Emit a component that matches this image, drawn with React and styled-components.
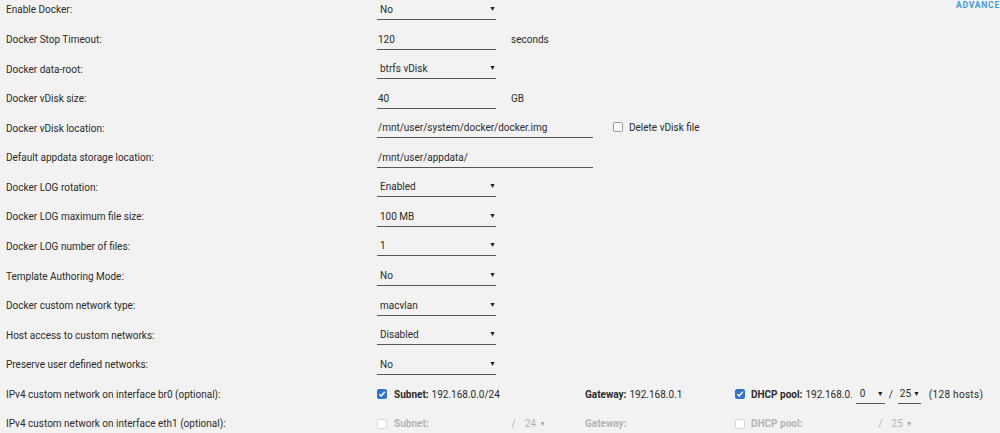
import React from "react";
import styled, { createGlobalStyle } from "styled-components";

const Global = createGlobalStyle`
  html, body { margin: 0; padding: 0; background: #f2f2f2; overflow: hidden; }
  body { font-family: Roboto, "Noto Sans", sans-serif; font-size: 10px; color: #2b2b2b; }
`;

const Page = styled.div`
  position: relative;
  width: 1000px;
  height: 433px;
  overflow: hidden;
`;

const Advanced = styled.div`
  position: absolute;
  top: 0px;
  right: 0px;
  white-space: nowrap;
  font-size: 8.5px;
  font-weight: 700;
  letter-spacing: 0.8px;
  color: #3d9be0;
  text-transform: uppercase;
`;

const List = styled.div`
  margin-top: -4.8px;
`;

const Row = styled.div`
  display: grid;
  grid-template-columns: 371px 1fr;
  align-items: center;
  height: 29.57px;
  padding-left: 6px;
`;

const Label = styled.div`
  white-space: nowrap;
`;

const Values = styled.div`
  display: flex;
  align-items: center;
  white-space: nowrap;
`;

const Select = styled.div`
  box-sizing: border-box;
  width: ${(p) => p.$w || 119}px;
  height: 20px;
  border-bottom: 1px solid #555;
  display: flex;
  align-items: center;
  justify-content: space-between;
  padding: 0 0 0 3px;
  line-height: 19px;
`;

const Arrow = styled.span`
  font-size: 7px;
  color: ${(p) => (p.$dim ? "#aaa" : "#222")};
  margin-left: ${(p) => p.$ml || 0}px;
`;

const Input = styled.div`
  box-sizing: border-box;
  width: ${(p) => p.$w || 119}px;
  height: 20px;
  border-bottom: 1px solid #555;
  padding-left: 1px;
  line-height: 19px;
`;

const Unit = styled.span`
  margin-left: ${(p) => p.$ml || 15}px;
`;

const Box = styled.span`
  box-sizing: border-box;
  display: inline-flex;
  align-items: center;
  justify-content: center;
  width: 10px;
  height: 10px;
  border-radius: 2px;
  border: 1px solid ${(p) => (p.$on ? "#3174d4" : p.$dim ? "#d8d8d8" : "#999")};
  background: ${(p) => (p.$on ? "#3174d4" : "#fff")};
  margin-right: ${(p) => p.$mr || 7}px;
`;

const Check = ({ on, dim, mr }) => (
  <Box $on={on} $dim={dim} $mr={mr}>
    {on && (
      <svg width="8" height="8" viewBox="0 0 8 8">
        <path d="M1.3 4.2 L3.2 6 L6.8 1.8" fill="none" stroke="#fff" strokeWidth="1.4" />
      </svg>
    )}
  </Box>
);

const Field = styled.span`
  display: inline-flex;
  align-items: center;
  color: ${(p) => (p.$dim ? "#b4b4b4" : "#2b2b2b")};
  width: ${(p) => (p.$w ? p.$w + "px" : "auto")};
  white-space: nowrap;
`;

const B = styled.b`
  font-weight: 700;
  margin-right: 3px;
`;

const Mini = styled.span`
  box-sizing: border-box;
  display: inline-flex;
  align-items: center;
  justify-content: ${(p) => (p.$line ? "space-between" : "flex-start")};
  width: ${(p) => p.$w}px;
  height: 20px;
  border-bottom: ${(p) => (p.$line ? "1px solid #555" : "none")};
  padding: 0 1px 0 ${(p) => p.$pl ?? 4}px;
  margin-left: ${(p) => p.$ml || 0}px;
`;

const Slash = styled.span`
  margin-left: ${(p) => p.$ml || 0}px;
  margin-right: ${(p) => p.$mr || 0}px;
`;

const Hosts = styled.span`
  margin-left: 8px;
  letter-spacing: 0.3px;
`;

const rows = [
  ["Enable Docker:", <Select>No<Arrow>▼</Arrow></Select>],
  ["Docker Stop Timeout:", <><Input>120</Input><Unit>seconds</Unit></>],
  ["Docker data-root:", <Select>btrfs vDisk<Arrow>▼</Arrow></Select>],
  ["Docker vDisk size:", <><Input>40</Input><Unit>GB</Unit></>],
  [
    "Docker vDisk location:",
    <>
      <Input $w={216}>/mnt/user/system/docker/docker.img</Input>
      <Unit $ml={20}><Field><Check mr={6} />Delete vDisk file</Field></Unit>
    </>,
  ],
  ["Default appdata storage location:", <Input $w={216}>/mnt/user/appdata/</Input>],
  ["Docker LOG rotation:", <Select>Enabled<Arrow>▼</Arrow></Select>],
  ["Docker LOG maximum file size:", <Select>100 MB<Arrow>▼</Arrow></Select>],
  ["Docker LOG number of files:", <Select>1<Arrow>▼</Arrow></Select>],
  ["Template Authoring Mode:", <Select>No<Arrow>▼</Arrow></Select>],
  ["Docker custom network type:", <Select>macvlan<Arrow>▼</Arrow></Select>],
  ["Host access to custom networks:", <Select>Disabled<Arrow>▼</Arrow></Select>],
  ["Preserve user defined networks:", <Select>No<Arrow>▼</Arrow></Select>],
  [
    "IPv4 custom network on interface br0 (optional):",
    <>
      <Field $w={208}><Check on /><B>Subnet:</B>192.168.0.0/24</Field>
      <Field $w={150}><B>Gateway:</B>192.168.0.1</Field>
      <Field>
        <Check on mr={6} /><B>DHCP pool:</B>192.168.0.
        <Mini $w={29} $line $ml={3}>0<Arrow>▼</Arrow></Mini>
        <Slash $ml={4} $mr={5}>/</Slash>
        <Mini $w={23} $line $pl={2}>25<Arrow>▼</Arrow></Mini>
        <Hosts>(128 hosts)</Hosts>
      </Field>
    </>,
  ],
  [
    "IPv4 custom network on interface eth1 (optional):",
    <>
      <Field $w={208} $dim>
        <Check dim /><B>Subnet:</B>
        <Slash $ml={80}>/</Slash>
        <Mini $w={30} $pl={9}>24<Arrow $dim $ml={3}>▼</Arrow></Mini>
      </Field>
      <Field $w={150} $dim><B>Gateway:</B></Field>
      <Field $dim>
        <Check dim mr={6} /><B>DHCP pool:</B>
        <Slash $ml={73}>/</Slash>
        <Mini $w={30} $pl={9}>25<Arrow $dim $ml={3}>▼</Arrow></Mini>
      </Field>
    </>,
  ],
];

export default function App() {
  return (
    <Page>
      <Global />
      <Advanced>Advance</Advanced>
      <List>
        {rows.map(([l, v], i) => (
          <Row key={i}>
            <Label>{l}</Label>
            <Values>{v}</Values>
          </Row>
        ))}
      </List>
    </Page>
  );
}
